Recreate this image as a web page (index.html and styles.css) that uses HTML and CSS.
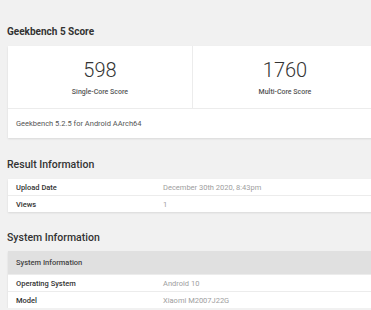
FILE: index.html
```html
<!DOCTYPE html>
<html lang="en">
<head>
    <meta charset="UTF-8">
    <meta name="viewport" content="width=device-width, initial-scale=1.0">
    <title>Geekbench 5 Result</title>
    <link rel="stylesheet" href="styles.css">
</head>
<body>
    <div class="page">
        <!-- Score summary -->
        <h2 class="section-title first">Geekbench 5 Score</h2>
        <div class="card">
            <div class="scores">
                <div class="score">
                    <div class="score-value">598</div>
                    <div class="score-label">Single-Core Score</div>
                </div>
                <div class="score">
                    <div class="score-value">1760</div>
                    <div class="score-label">Multi-Core Score</div>
                </div>
            </div>
            <div class="card-footer">Geekbench 5.2.5 for Android AArch64</div>
        </div>

        <!-- Result info -->
        <h2 class="section-title result">Result Information</h2>
        <table class="info-table">
            <tr>
                <td class="name">Upload Date</td>
                <td class="value">December 30th 2020, 8:43pm</td>
            </tr>
            <tr>
                <td class="name">Views</td>
                <td class="value">1</td>
            </tr>
        </table>

        <!-- System info -->
        <h2 class="section-title">System Information</h2>
        <table class="info-table">
            <tr class="table-head">
                <th colspan="2">System Information</th>
            </tr>
            <tr>
                <td class="name">Operating System</td>
                <td class="value">Android 10</td>
            </tr>
            <tr>
                <td class="name">Model</td>
                <td class="value">Xiaomi M2007J22G</td>
            </tr>
        </table>
    </div>
</body>
</html>
```

FILE: styles.css
```css
/* Base styles */
html, body {
    overflow: hidden;
}

body {
    margin: 0;
    background: #f1f1f1;
    font-family: Roboto, "Liberation Sans", sans-serif;
    color: #333;
}

/* Content column (wider than the window, clipped on the right) */
.page {
    width: 369px;
    padding-left: 8px;
}

/* Section headings */
.section-title {
    margin: 19px 0 6px -1px;
    font-size: 10.5px;
    line-height: 14px;
    font-weight: 500;
    color: #333;
}

.section-title.result {
    margin-top: 20px;
    margin-bottom: 7px;
}

.section-title.first {
    margin-top: 25px;
    margin-bottom: 7px;
    font-size: 10px;
    font-weight: 700;
}

/* Score card */
.card {
    background: #fff;
    box-shadow: 0 1px 2px rgba(0, 0, 0, 0.1);
}

.scores {
    display: flex;
    border-bottom: 1px solid #ececec;
}

.score {
    flex: 1;
    text-align: center;
    padding: 12px 0 11px;
}

.score + .score {
    border-left: 1px solid #ececec;
}

.score-value {
    font-size: 20px;
    line-height: 24px;
    font-weight: 300;
    color: #333;
}

.score-label {
    margin-top: 5px;
    font-size: 7px;
    line-height: 10px;
    font-weight: 500;
    color: #555;
}

.card-footer {
    height: 29px;
    line-height: 29px;
    padding-left: 8px;
    font-size: 7.5px;
    color: #555;
}

/* Info tables */
.info-table {
    width: 100%;
    border-collapse: collapse;
    background: #fff;
    box-shadow: 0 1px 2px rgba(0, 0, 0, 0.1);
    font-size: 7.5px;
}

.info-table td,
.info-table th {
    height: 16px;
    padding: 0 0 0 8px;
    text-align: left;
    border-top: 1px solid #ececec;
}

.info-table tr:first-child td {
    border-top: none;
}

.info-table .name {
    width: 139px;
    font-weight: 500;
    color: #333;
}

.info-table .value {
    color: #9e9e9e;
}

.table-head th {
    height: 23px;
    border-top: none;
    background: #e0e0e0;
    font-weight: 500;
    color: #444;
}
```
